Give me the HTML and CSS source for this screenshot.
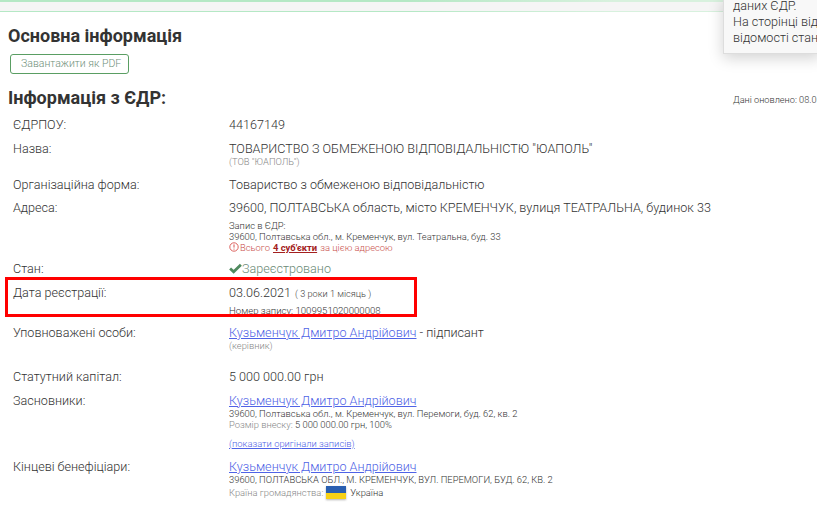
FILE: index.html
```html
<!DOCTYPE html>
<html lang="uk">
<head>
<meta charset="utf-8">
<title>Основна інформація</title>
<link rel="stylesheet" href="styles.css">
</head>
<body>
<div class="topbar"></div>
<main class="content">
  <h1 class="title">Основна інформація</h1>
  <a class="pdf-btn">Завантажити як PDF</a>
  <div class="edr-head">
    <h2 class="subtitle">Інформація з ЄДР:</h2>
    <span class="updated">Дані оновлено: 08.0</span>
  </div>
  <div class="rows">
    <div class="row">
      <div class="label">ЄДРПОУ:</div>
      <div class="value"><div class="main">44167149</div></div>
    </div>
    <div class="row">
      <div class="label">Назва:</div>
      <div class="value">
        <div class="main">ТОВАРИСТВО З ОБМЕЖЕНОЮ ВІДПОВІДАЛЬНІСТЮ "ЮАПОЛЬ"</div>
        <div class="small muted tight">(ТОВ "ЮАПОЛЬ")</div>
      </div>
    </div>
    <div class="row">
      <div class="label">Організаційна форма:</div>
      <div class="value"><div class="main">Товариство з обмеженою відповідальністю</div></div>
    </div>
    <div class="row">
      <div class="label">Адреса:</div>
      <div class="value">
        <div class="main">39600, ПОЛТАВСЬКА область, місто КРЕМЕНЧУК, вулиця ТЕАТРАЛЬНА, будинок 33</div>
        <div class="small addr-first">Запис в ЄДР:</div>
        <div class="small">39600, Полтавська обл., м. Кременчук, вул. Театральна, буд. 33</div>
        <div class="small warn"><svg class="warn-icon" viewBox="0 0 10 10" aria-hidden="true"><circle cx="5" cy="5" r="4.2" fill="none" stroke="#d9534f" stroke-width=".9"/><path d="M5 2.4v3.2M5 6.6v1" stroke="#d9534f" stroke-width="1"/></svg>Всього <a class="warn-link">4 суб'єкти</a> за цією адресою</div>
      </div>
    </div>
    <div class="row">
      <div class="label">Стан:</div>
      <div class="value"><div class="main status"><svg class="check" viewBox="0 0 14 11" aria-hidden="true"><path d="M1.2 5.4 5 9 12.8 1.4" fill="none" stroke="#4f8a5f" stroke-width="3"/></svg>Зареєстровано</div></div>
    </div>
    <div class="row">
      <div class="label">Дата реєстрації:</div>
      <div class="value">
        <div class="main">03.06.2021 <span class="age">( 3 роки 1 місяць )</span></div>
        <div class="small record">Номер запису: 1009951020000008</div>
      </div>
    </div>
    <div class="row row-signer">
      <div class="label">Уповноважені особи:</div>
      <div class="value">
        <div class="main"><a class="link">Кузьменчук Дмитро Андрійович</a> - підписант</div>
        <div class="small muted tight">(керівник)</div>
      </div>
    </div>
    <div class="row">
      <div class="label">Статутний капітал:</div>
      <div class="value"><div class="main">5 000 000.00 грн</div></div>
    </div>
    <div class="row row-founder">
      <div class="label">Засновники:</div>
      <div class="value">
        <div class="main"><a class="link">Кузьменчук Дмитро Андрійович</a></div>
        <div class="small">39600, Полтавська обл., м. Кременчук, вул. Перемоги, буд. 62, кв. 2</div>
        <div class="small"><span class="muted">Розмір внеску:</span> 5 000 000.00 грн, 100%</div>
        <div class="small originals"><a class="link">(показати оригінали записів)</a></div>
      </div>
    </div>
    <div class="row">
      <div class="label">Кінцеві бенефіціари:</div>
      <div class="value">
        <div class="main"><a class="link">Кузьменчук Дмитро Андрійович</a></div>
        <div class="small">39600, ПОЛТАВСЬКА ОБЛ., М. КРЕМЕНЧУК, ВУЛ. ПЕРЕМОГИ, БУД. 62, КВ. 2</div>
        <div class="small country"><span class="muted">Країна громадянства:</span><span class="flag"></span>Україна</div>
      </div>
    </div>
  </div>
</main>
<aside class="popup">даних ЄДР.<br>На сторінці від<br>відомості стан</aside>
<div class="highlight"></div>
</body>
</html>
```

FILE: styles.css
```css
* { box-sizing: border-box; }
html, body { margin: 0; padding: 0; height: 508px; overflow: hidden; }
body {
  position: relative;
  background: #fff;
  color: #333;
  font-family: Roboto, "Liberation Sans", sans-serif;
  font-weight: 300;
  font-size: 12.6px;
}
.topbar {
  height: 12px;
  background: #f5f5f5;
  border-top: 2px solid;
  border-image: linear-gradient(90deg, #b5e8c5 50%, #d8f1de 75%, #d8f1de) 1;
  border-bottom: 1px solid #ddd;
}
.content { padding: 14px 0 0 8px; }
.title {
  margin: 0;
  font-size: 18px;
  line-height: 20px;
  font-weight: 700;
  color: #333;
}
.pdf-btn {
  display: block;
  width: 119px;
  height: 20px;
  margin: 8px 0 0 2px;
  padding-left: 10px;
  border: 1px solid #5a9e63;
  border-radius: 3px;
  color: #6f8f7a;
  font-size: 10.5px;
  line-height: 18px;
  font-weight: 300;
}
.edr-head { display: flex; align-items: flex-start; margin-top: 13px; height: 22px; }
.subtitle {
  margin: 0;
  width: 725px;
  flex: none;
  font-size: 18px;
  line-height: 22px;
  font-weight: 700;
  color: #333;
}
.updated { font-size: 9.2px; line-height: 12px; margin-top: 7px; font-weight: 300; white-space: nowrap; color: #333; }
.rows { margin-top: 4px; padding-left: 5px; }
.row { display: flex; padding: 4px 0 4.5px; }
.label { width: 216px; flex: none; line-height: 15px; }
.value { flex: 1; min-width: 0; }
.main { line-height: 15px; white-space: nowrap; }
.small { font-size: 9.4px; line-height: 11px; font-weight: 300; white-space: nowrap; color: #333; }
.muted { color: #888; }
.tight { line-height: 12.5px; }
.addr-first { margin-top: 4.5px; }
.warn { color: #c9504c; display: flex; align-items: center; }
.warn-icon { width: 10px; height: 10px; margin-right: 1px; }
.warn-link { color: #a32020; font-weight: 700; text-decoration: underline; margin: 0 3px; }
.status { color: #6b8a76; display: flex; align-items: center; }
.check { width: 13px; height: 11px; }
.age { font-size: 9.2px; font-weight: 300; margin-left: 1px; color: #444; }
.record { margin-top: 4px; line-height: 12px; font-size: 9.6px; }
.row-signer { padding-bottom: 12.5px; }
.link { color: #4f63e6; text-decoration: underline; }
.row-founder .small { line-height: 11.5px; }
.row-founder .originals { margin: 7px 0 1px; line-height: 12px; }
.country { display: flex; align-items: center; height: 14px; }
.flag {
  width: 20px;
  height: 13px;
  margin: 0 4px 0 3px;
  background: linear-gradient(#2a5fb0 50%, #f7d116 50%);
  box-shadow: 0 1px 2px rgba(0,0,0,.3);
}
.popup {
  position: absolute;
  left: 723px;
  top: -3px;
  right: -4px;
  height: 57px;
  padding: 0 0 0 9px;
  background: #f8f8f8;
  border: 1px solid #ddd;
  box-shadow: 0 4px 14px rgba(0,0,0,.18);
  font-size: 12.6px;
  line-height: 16px;
  font-weight: 300;
  color: #333;
  white-space: nowrap;
}
.highlight {
  position: absolute;
  left: 5px;
  top: 277px;
  width: 412px;
  height: 40px;
  border: 3px solid #f00;
}
```
